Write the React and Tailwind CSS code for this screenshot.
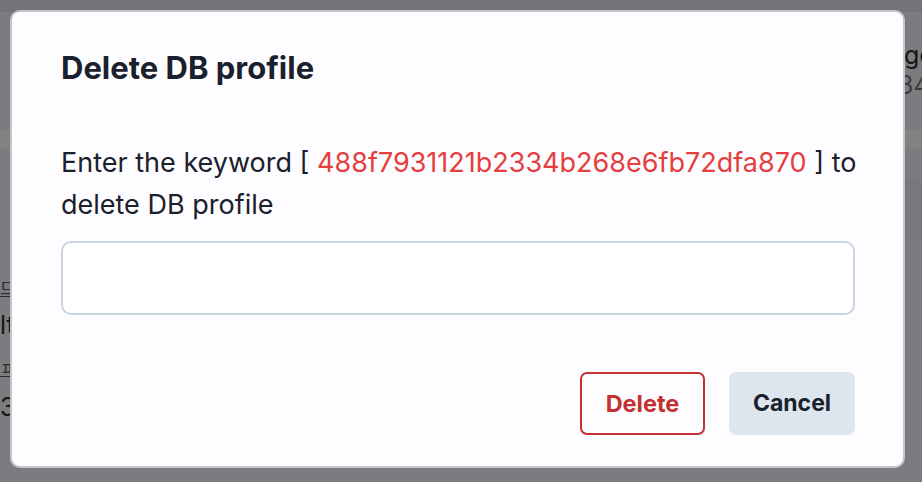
import React from 'react';

const KEYWORD = '488f7931121b2334b268e6fb72dfa870';

// page sitting behind the dimmed overlay; only its edges show
const BackgroundPage = () => (
  <div className="flex h-full w-full flex-col bg-[#7b7c80] text-[#151618]">
    <div className="h-[12px] bg-[#737478]" />
    <div className="flex h-[118px] justify-end">
      <div className="flex w-[25px] flex-col overflow-hidden pt-[28px] text-[25px] leading-[30px] whitespace-nowrap">
        <span className="pl-[7px]">go</span>
        <span className="pl-[1px] text-[#3a3b3e]">34</span>
      </div>
    </div>
    <div className="h-[18px] bg-[#838280]" />
    <div className="flex h-[32px]" />
    <div className="flex h-[60px] justify-end">
      <div className="w-[17px] bg-[#77787c]" />
    </div>
    <div className="flex flex-col overflow-hidden pt-[36px] w-[10px] whitespace-nowrap">
      <span className="text-[17px] leading-[26px] text-[#2a2b2d] underline">므l</span>
      <span className="mt-[8px] text-[25px] leading-[30px]">lt</span>
      <span className="mt-[16px] text-[17px] leading-[26px] text-[#2a2b2d] underline">ㅍ</span>
      <span className="mt-[10px] text-[25px] leading-[30px]">31</span>
    </div>
  </div>
);

const DeleteProfileModal = () => {
  const [value, setValue] = React.useState('');

  return (
    <div className="absolute left-[10px] top-[10px] flex h-[458px] w-[895px] flex-col rounded-[10px] border-2 border-[#c4c5c8] bg-[#fdfdff] pl-[49px] pr-[48px] pt-[36px] pb-[31px]">
      <h2 className="text-[31px] leading-[40px] font-bold text-[#1a202c]">Delete DB profile</h2>
      <p className="mt-[54px] -mr-[10px] text-[27px] leading-[42px] text-[#1a202c]">
        Enter the keyword [ <span className="text-[#e53e3e]">{KEYWORD}</span> ] to delete DB profile
      </p>
      <input
        value={value}
        onChange={e => setValue(e.target.value)}
        className="mt-[15px] h-[74px] w-full rounded-[10px] border-2 border-[#cbd5e0] bg-white px-5 text-[25px] outline-none"
      />
      <div className="mt-auto flex justify-end gap-[24px]">
        <button className="h-[63px] w-[125px] rounded-[7px] border-2 border-[#c53030] text-[23.5px] font-bold text-[#c53030]">
          Delete
        </button>
        <button className="h-[63px] w-[126px] rounded-[7px] bg-[#dde6ef] text-[23px] font-bold text-[#1a202c]">
          Cancel
        </button>
      </div>
    </div>
  );
};

export default function App() {
  return (
    <div className="relative h-[482px] w-[922px] overflow-hidden font-['Inter','Noto_Sans_CJK_KR',sans-serif]">
      <BackgroundPage />
      <DeleteProfileModal />
    </div>
  );
}
